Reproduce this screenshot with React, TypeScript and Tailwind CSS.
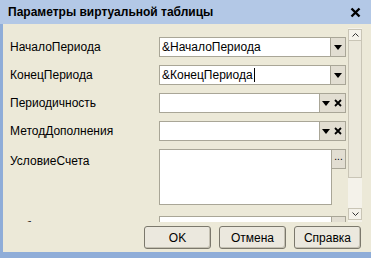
function DropArrow() {
  return (
    <svg width="8" height="5" viewBox="0 0 8 5">
      <polygon points="0,0 8,0 4,5" fill="#000" />
    </svg>
  );
}

function ClearIcon() {
  return (
    <svg width="8" height="8" viewBox="0 0 8 8">
      <path d="M1 1 L7 7 M7 1 L1 7" stroke="#000" strokeWidth="1.8" />
    </svg>
  );
}

function FieldButton({ children }: { children: React.ReactNode }) {
  return (
    <div className="flex w-[15px] shrink-0 items-center justify-center border border-l-0 border-[#a9a697] bg-[#e2ded2]">
      {children}
    </div>
  );
}

function Row({ label, value, caret, clear }: { label: string; value?: string; caret?: boolean; clear?: boolean }) {
  return (
    <div className="flex h-[20px] shrink-0 items-center">
      <div className="w-[149px] shrink-0">{label}</div>
      <div className="flex h-full flex-1">
        <div className="flex flex-1 items-center border border-[#a9a697] bg-white pl-[2px]">
          {value}
          {caret && <span className="ml-px h-[14px] w-px bg-black" />}
        </div>
        {clear ? (
          <>
            <div className="flex w-[11px] shrink-0 items-center justify-center border-y border-[#a9a697] bg-[#e2ded2]">
              <DropArrow />
            </div>
            <FieldButton>
              <ClearIcon />
            </FieldButton>
          </>
        ) : (
          <FieldButton>
            <DropArrow />
          </FieldButton>
        )}
      </div>
    </div>
  );
}

function ScrollBtn({ up }: { up?: boolean }) {
  return (
    <div className="flex h-[12px] shrink-0 items-center justify-center border border-[#c9c5b6] bg-[#f4f2ea]">
      <svg width="7" height="4" viewBox="0 0 7 4">
        <path d={up ? "M0.5 3.5 L3.5 0.5 L6.5 3.5" : "M0.5 0.5 L3.5 3.5 L6.5 0.5"} stroke="#333" fill="none" strokeWidth="1" />
      </svg>
    </div>
  );
}

export default function App() {
  return (
    <div
      className="flex h-[258px] w-[371px] flex-col overflow-hidden bg-[#ece9d8] text-[12px] text-black"
      style={{ fontFamily: '"Liberation Sans", Arial, sans-serif' }}
    >
      {/* title bar */}
      <div className="flex h-[24px] shrink-0 items-center justify-between bg-[#b3c8e6] pl-[8px] pr-[10px]">
        <span className="font-bold">Параметры виртуальной таблицы</span>
        <svg width="11" height="11" viewBox="0 0 11 11">
          <path d="M1.5 1.5 L9.5 9.5 M9.5 1.5 L1.5 9.5" stroke="#000" strokeWidth="2.4" />
        </svg>
      </div>

      <div className="flex flex-1 flex-col border-b-[6px] border-l-[3px] border-[#8fadd8]">
        {/* form area */}
        <div className="flex h-[198px] shrink-0 pt-[4px]">
          <div className="flex flex-1 flex-col gap-[8px] overflow-hidden pl-[7px] pt-[9px]">
            <Row label="НачалоПериода" value="&НачалоПериода" />
            <Row label="КонецПериода" value="&КонецПериода" caret />
            <Row label="Периодичность" clear />
            <Row label="МетодДополнения" clear />
            <div className="flex h-[56px] shrink-0">
              <div className="w-[149px] shrink-0 pt-[3px]">УсловиеСчета</div>
              <div className="flex flex-1 items-start">
                <div className="h-full flex-1 border border-[#a9a697] bg-white" />
                <div className="flex h-[20px] w-[14px] shrink-0 items-center justify-center border border-l-0 border-[#a9a697] bg-[#e2ded2] pb-[4px] text-[10px] leading-none">
                  ...
                </div>
              </div>
            </div>
            <div className="mt-[3px] flex h-[20px] shrink-0">
              <div className="w-[149px] shrink-0 pt-[2px]">Субконто</div>
              <div className="flex h-full flex-1">
                <div className="flex-1 border border-[#a9a697] bg-white" />
                <div className="w-[14px] border border-l-0 border-[#a9a697] bg-[#e2ded2]" />
              </div>
            </div>
          </div>

          {/* scrollbar */}
          <div className="ml-[2px] mr-[9px] flex w-[14px] shrink-0 flex-col bg-[#f4f2ea] pb-[2px] pt-px">
            <ScrollBtn up />
            <div className="h-[137px] shrink-0 border border-t-0 border-[#c9c5b6] bg-[#ebe8db]" />
            <div className="flex-1" />
            <ScrollBtn />
          </div>
        </div>

        {/* buttons */}
        <div className="flex justify-end gap-[8px] pr-[10px] pt-[4px]">
          {["OK", "Отмена", "Справка"].map((t) => (
            <div
              key={t}
              className="flex h-[23px] w-[67px] items-center justify-center rounded-[3px] border border-[#7b786c] bg-[#ebe8de] shadow-[inset_-1px_-1px_0_#c4c0b2]"
            >
              {t}
            </div>
          ))}
        </div>
      </div>
    </div>
  );
}
